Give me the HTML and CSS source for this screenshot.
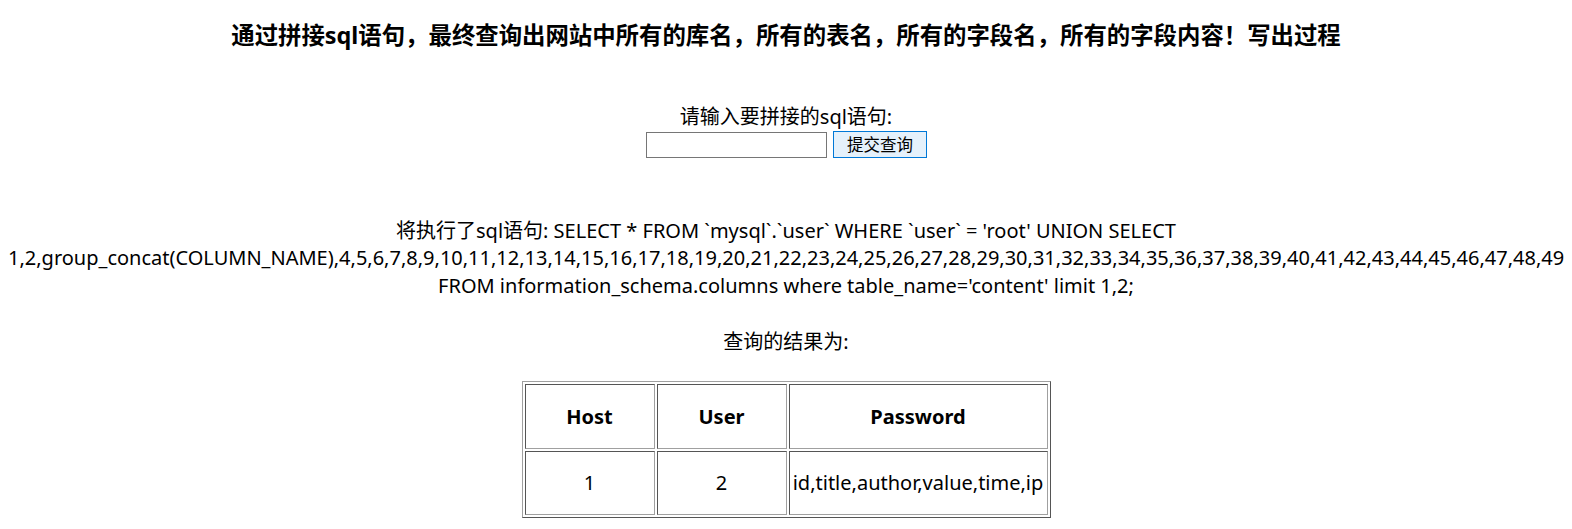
FILE: index.html
```html
<!DOCTYPE html>
<html lang="zh-CN">
<head>
<meta charset="utf-8">
<title>SQL</title>
<link rel="stylesheet" href="styles.css">
</head>
<body>
<h3 class="title">通过拼接sql语句，最终查询出网站中所有的库名，所有的表名，所有的字段名，所有的字段内容！写出过程</h3>
<form class="query-form">
  <div class="prompt">请输入要拼接的sql语句:</div>
  <div class="controls">
    <input class="text-input" type="text" name="sql">
    <button class="submit" type="button">提交查询</button>
  </div>
</form>
<div class="sql-text">将执行了sql语句: SELECT * FROM `mysql`.`user` WHERE `user` = 'root' UNION SELECT 1,2,group_concat(COLUMN_NAME),4,5,6,7,8,9,10,11,12,13,14,15,16,17,18,19,20,21,22,23,24,25,26,27,28,29,30,31,32,33,34,35,36,37,38,39,40,41,42,43,44,45,46,47,48,49 FROM information_schema.columns where table_name='content' limit 1,2;</div>
<div class="result-label">查询的结果为:</div>
<div class="table-wrap">
<table class="result">
  <tr class="head-row">
    <th class="col-host">Host</th>
    <th class="col-user">User</th>
    <th class="col-pass">Password</th>
  </tr>
  <tr class="data-row">
    <td>1</td>
    <td>2</td>
    <td>id,title,author,value,time,ip</td>
  </tr>
</table>
</div>
</body>
</html>
```
FILE: styles.css
```css
html, body {
  background: #ffffff;
}
body {
  margin: 0;
  padding: 8px;
  font-family: "Noto Sans", "Noto Sans CJK SC", sans-serif;
  font-size: 20px;
  line-height: 27.5px;
  color: #000;
  text-align: center;
}
.title {
  margin: 11px 0 0;
  font-size: 23.4px;
  line-height: 32px;
  font-weight: bold;
}
.query-form {
  margin: 52px 0 0;
}
.prompt {
  line-height: 27.5px;
}
.controls {
  display: flex;
  justify-content: center;
  align-items: center;
  gap: 6px;
  margin-top: 0;
  height: 28px;
}
.text-input {
  box-sizing: border-box;
  width: 181px;
  height: 26px;
  margin: 0 0 0 1px;
  border: 1px solid #767676;
  padding: 1px 2px;
  background: #fff;
}
.submit {
  box-sizing: border-box;
  width: 94px;
  height: 27px;
  margin: 0;
  padding: 0;
  border: 1px solid #0078d7;
  background: #e5f1fb;
  font-family: "Noto Sans CJK SC", sans-serif;
  font-size: 16.5px;
  line-height: 25px;
  color: #000;
}
.sql-text {
  margin-top: 58px;
}
.result-label {
  margin-top: 29px;
}
.table-wrap {
  display: flex;
  justify-content: center;
  margin-top: 25px;
}
.result {
  border-collapse: separate;
  border-spacing: 2px;
  border-style: solid;
  border-width: 1px;
  border-color: #a0a0a0 #555555 #555555 #a0a0a0;
}
.result th,
.result td {
  border-style: solid;
  border-width: 1px;
  border-color: #555555 #a0a0a0 #a0a0a0 #555555;
  padding: 1px;
  text-align: center;
  vertical-align: middle;
}
.head-row th {
  height: 59px;
  padding-top: 3px;
  font-weight: bold;
}
.data-row td {
  height: 60px;
}
.col-host,
.col-user {
  width: 126px;
}
.col-pass {
  width: 255px;
}
```
